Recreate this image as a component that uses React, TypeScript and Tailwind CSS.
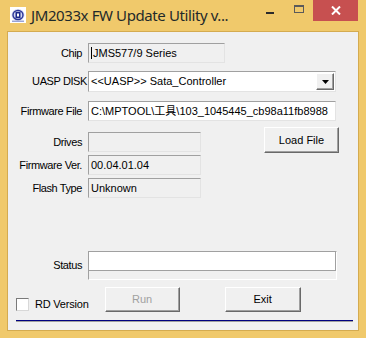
import React from 'react'

const sunken = 'border-t border-l border-t-[#a0a0a0] border-l-[#a0a0a0] border-r border-b border-r-[#e3e3e3] border-b-[#e3e3e3]'
const raised =
  'border border-t-white border-l-white border-r-[#696969] border-b-[#696969] shadow-[inset_-1px_-1px_0_#a0a0a0] bg-[#f0f0f0]'

function Label({ text, pr = 'pr-[6px]' }: { text: string; pr?: string }) {
  return (
    <div className={`w-[80px] shrink-0 text-right whitespace-nowrap tracking-[-0.4px] ${pr}`}>{text}</div>
  )
}

function AppIcon() {
  return (
    <svg width="16" height="16" viewBox="0 0 16 16">
      <rect width="16" height="16" fill="#fff" />
      <ellipse cx="8" cy="8" rx="6.5" ry="6" fill="#d3d7ee" />
      <ellipse cx="8" cy="8" rx="5" ry="4.5" fill="none" stroke="#2a3596" strokeWidth="1.4" />
      <rect x="5.5" y="5" width="5" height="6" fill="#1c2a8a" />
      <rect x="7" y="6.5" width="2" height="3" fill="#fff" />
      <rect x="2" y="13.5" width="12" height="1.5" fill="#9aa3d6" />
    </svg>
  )
}

export default function App() {
  return (
    <div className="w-[366px] h-[338px] bg-[#f0c96b] flex flex-col text-[11px] text-black font-['Liberation_Sans',Arial,sans-serif] overflow-hidden">
      {/* Title bar */}
      <div className="h-[31px] flex items-start shrink-0">
        <div className="ml-[10px] mt-[7px]">
          <AppIcon />
        </div>
        <div className="ml-[5px] mt-[4px] text-[15px] text-[#1f2a2a] whitespace-nowrap font-['Noto_Sans','Liberation_Sans',sans-serif] tracking-[-0.4px]">
          JM2033x FW Update Utility v...
        </div>
        <div className="flex-1" />
        <div className="w-[30px] h-[21px] flex items-center justify-center mt-0">
          <div className="w-[8px] h-[2px] bg-[#2b2b2b] mt-[5px]" />
        </div>
        <div className="w-[28px] h-[21px] flex items-center justify-center">
          <div className="w-[10px] h-[8px] border border-[#5a5a5a] border-t-2 -mt-[3px]" />
        </div>
        <div className="w-[45px] h-[21px] bg-[#c75050] flex items-center justify-center mr-[8px]">
          <svg width="10" height="9" viewBox="0 0 10 9">
            <path d="M1 0.5 L9 8.5 M9 0.5 L1 8.5" stroke="#fff" strokeWidth="2" />
          </svg>
        </div>
      </div>

      {/* Client area */}
      <div className="mx-[7px] h-[300px] border border-[#d4ab50] bg-[#f0f0f0] flex flex-col">
        {/* Chip */}
        <div className="flex items-center mt-[11px] h-[20px]">
          <Label text="Chip" />
          <div className={`w-[137px] h-[20px] ${sunken} flex items-center pl-[2px]`}>
            <span className="w-px h-[12px] bg-black mr-px" />
            JMS577/9 Series
          </div>
        </div>

        {/* UASP DISK */}
        <div className="flex items-center mt-[8px] h-[21px]">
          <Label text="UASP DISK" pr="pr-[1px]" />
          <div className={`w-[248px] h-[21px] ${sunken} bg-white flex items-center pl-[2px]`}>
            <span className="flex-1 whitespace-nowrap">&lt;&lt;UASP&gt;&gt; Sata_Controller</span>
            <div className={`w-[18px] h-[17px] ${raised} flex items-center justify-center mr-px`}>
              <svg width="7" height="4" viewBox="0 0 7 4">
                <path d="M0 0 H7 L3.5 4 Z" fill="#000" />
              </svg>
            </div>
          </div>
        </div>

        {/* Firmware File */}
        <div className="flex items-center mt-[9px] h-[20px]">
          <Label text="Firmware File" />
          <div className={`w-[248px] h-[20px] ${sunken} bg-white flex items-center pl-[2px] overflow-hidden`}>
            <span className="whitespace-nowrap font-['Liberation_Sans','Noto_Sans_CJK_SC',sans-serif]">
              C:\MPTOOL\工具\103_1045445_cb98a11fb8988
            </span>
          </div>
        </div>

        {/* Drives / Firmware Ver / Flash Type + Load File */}
        <div className="flex mt-[6px]">
          <div className="flex flex-col gap-[3px] pt-[5px]">
            <div className="flex items-center h-[20px]">
              <Label text="Drives" />
              <div className={`w-[113px] h-[20px] ${sunken}`} />
            </div>
            <div className="flex items-center h-[20px]">
              <Label text="Firmware Ver." />
              <div className={`w-[113px] h-[20px] ${sunken} flex items-center pl-[2px]`}>00.04.01.04</div>
            </div>
            <div className="flex items-center h-[20px]">
              <Label text="Flash Type" />
              <div className={`w-[113px] h-[20px] ${sunken} flex items-center pl-[2px]`}>Unknown</div>
            </div>
          </div>
          <div className={`ml-[63px] w-[75px] h-[26px] ${raised} flex items-center justify-center`}>Load File</div>
        </div>

        {/* Status */}
        <div className="flex items-center mt-[53px]">
          <Label text="Status" />
          <div className="w-[249px] h-[29px] border-t border-l border-[#a0a0a0] border-r border-b border-r-white border-b-white">
            <div className="h-[19px] bg-white border-b border-r border-[#a0a0a0]" />
          </div>
        </div>

        {/* Bottom row */}
        <div className="flex items-center mt-[7px] h-[25px]">
          <div className="ml-[8px] mt-[10px] w-[13px] h-[13px] bg-white border border-[#7a7a7a] border-r-[#d8d8d8] border-b-[#d8d8d8]" />
          <span className="ml-[6px] mt-[10px] tracking-[-0.2px]">RD Version</span>
          <div className={`ml-[16px] w-[75px] h-[25px] ${raised} flex items-center justify-center text-[#a0a0a0]`}>Run</div>
          <div className={`ml-[45px] w-[76px] h-[25px] ${raised} flex items-center justify-center`}>Exit</div>
        </div>

        {/* Separator */}
        <div className="mt-[8px] ml-[8px] w-[337px] h-[2px] border-t border-[#000080] border-b border-b-[#a0a0a0]" />
      </div>
    </div>
  )
}
